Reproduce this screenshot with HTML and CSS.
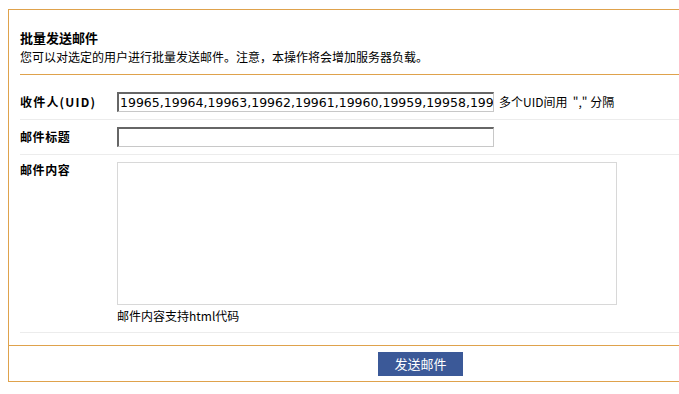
FILE: index.html
```html
<!DOCTYPE html>
<html lang="zh-CN">
<head>
<meta charset="utf-8">
<title>批量发送邮件</title>
<link rel="stylesheet" href="styles.css">
</head>
<body>
<div class="wrap">
  <div class="head">
    <h3 class="title">批量发送邮件</h3>
    <p class="desc">您可以对选定的用户进行批量发送邮件。注意，本操作将会增加服务器负载。</p>
  </div>
  <div class="row row-first">
    <div class="label label-uid">收件人(UID)</div>
    <div class="field">
      <input class="txt" type="text" value="19965,19964,19963,19962,19961,19960,19959,19958,19957,19956">
      <span class="hint">多个UID间用&nbsp;&nbsp;&quot;,&quot;&nbsp;分隔</span>
    </div>
  </div>
  <div class="row row-second">
    <div class="label">邮件标题</div>
    <div class="field">
      <input class="txt" type="text" value="">
    </div>
  </div>
  <div class="row row-third">
    <div class="label">邮件内容</div>
    <div class="field field-col">
      <textarea class="area"></textarea>
      <div class="note">邮件内容支持html代码</div>
    </div>
  </div>
  <div class="foot">
    <button class="btn" type="button">发送邮件</button>
  </div>
</div>
</body>
</html>
```
FILE: styles.css
```css
html, body {
  margin: 0;
  padding: 0;
  background: #fff;
}
body {
  font-family: "Noto Sans CJK SC", "DejaVu Sans", sans-serif;
  font-size: 12px;
  color: #000;
}
.wrap {
  margin: 9px 0 0 8px;
  border-top: 1px solid #dfa24c;
  border-left: 1px solid #dfa24c;
  border-bottom: 1px solid #dfa24c;
  padding-bottom: 5px;
}
.head {
  margin-left: 11px;
  padding: 20px 0 9px;
  border-bottom: 1px solid #dfa24c;
}
.title {
  margin: 0;
  font-size: 13px;
  line-height: 16px;
  font-weight: bold;
}
.desc {
  margin: 3px 0 0;
  font-size: 12px;
  line-height: 16px;
}
.row {
  margin-left: 11px;
  border-bottom: 1px solid #ececec;
  display: flex;
  align-items: center;
}
.row-first {
  padding: 17px 0 7px;
}
.row-second {
  padding: 7px 0 7px;
}
.row-third {
  padding: 7px 0 8px;
  align-items: flex-start;
}
.label {
  width: 97px;
  flex: none;
  font-weight: bold;
  font-size: 12px;
  line-height: 16px;
  letter-spacing: 0.6px;
}
.label-uid {
  letter-spacing: 1.2px;
}
.field {
  display: flex;
  align-items: center;
}
.field-col {
  flex-direction: column;
  align-items: flex-start;
}
.txt {
  box-sizing: border-box;
  width: 377px;
  height: 20px;
  margin: 0;
  padding: 0 0 0 1px;
  border-style: solid;
  border-width: 2px 1px 1px 2px;
  border-color: #666 #c8c8c8 #c8c8c8 #666;
  font-family: "DejaVu Sans", Verdana, sans-serif;
  font-size: 12.5px;
  color: #000;
  background: #fff;
  outline: none;
}
.hint {
  margin-left: 5px;
  font-size: 12px;
  line-height: 16px;
}
.area {
  box-sizing: border-box;
  width: 500px;
  height: 143px;
  margin: 0;
  padding: 2px;
  border: 1px solid #d8d8d8;
  resize: none;
  font-family: "DejaVu Sans", sans-serif;
  font-size: 12px;
  outline: none;
}
.note {
  margin-top: 3px;
  font-size: 12px;
  line-height: 16px;
}
.foot {
  margin-top: 12px;
  border-top: 1px solid #dfa24c;
  padding: 6px 0 0 369px;
}
.btn {
  display: block;
  width: 85px;
  height: 24px;
  margin: 0;
  padding: 0;
  border: none;
  background: #3b5998;
  color: #fff;
  font-family: "Noto Sans CJK SC", sans-serif;
  font-size: 13px;
  line-height: 24px;
  cursor: pointer;
}
```
